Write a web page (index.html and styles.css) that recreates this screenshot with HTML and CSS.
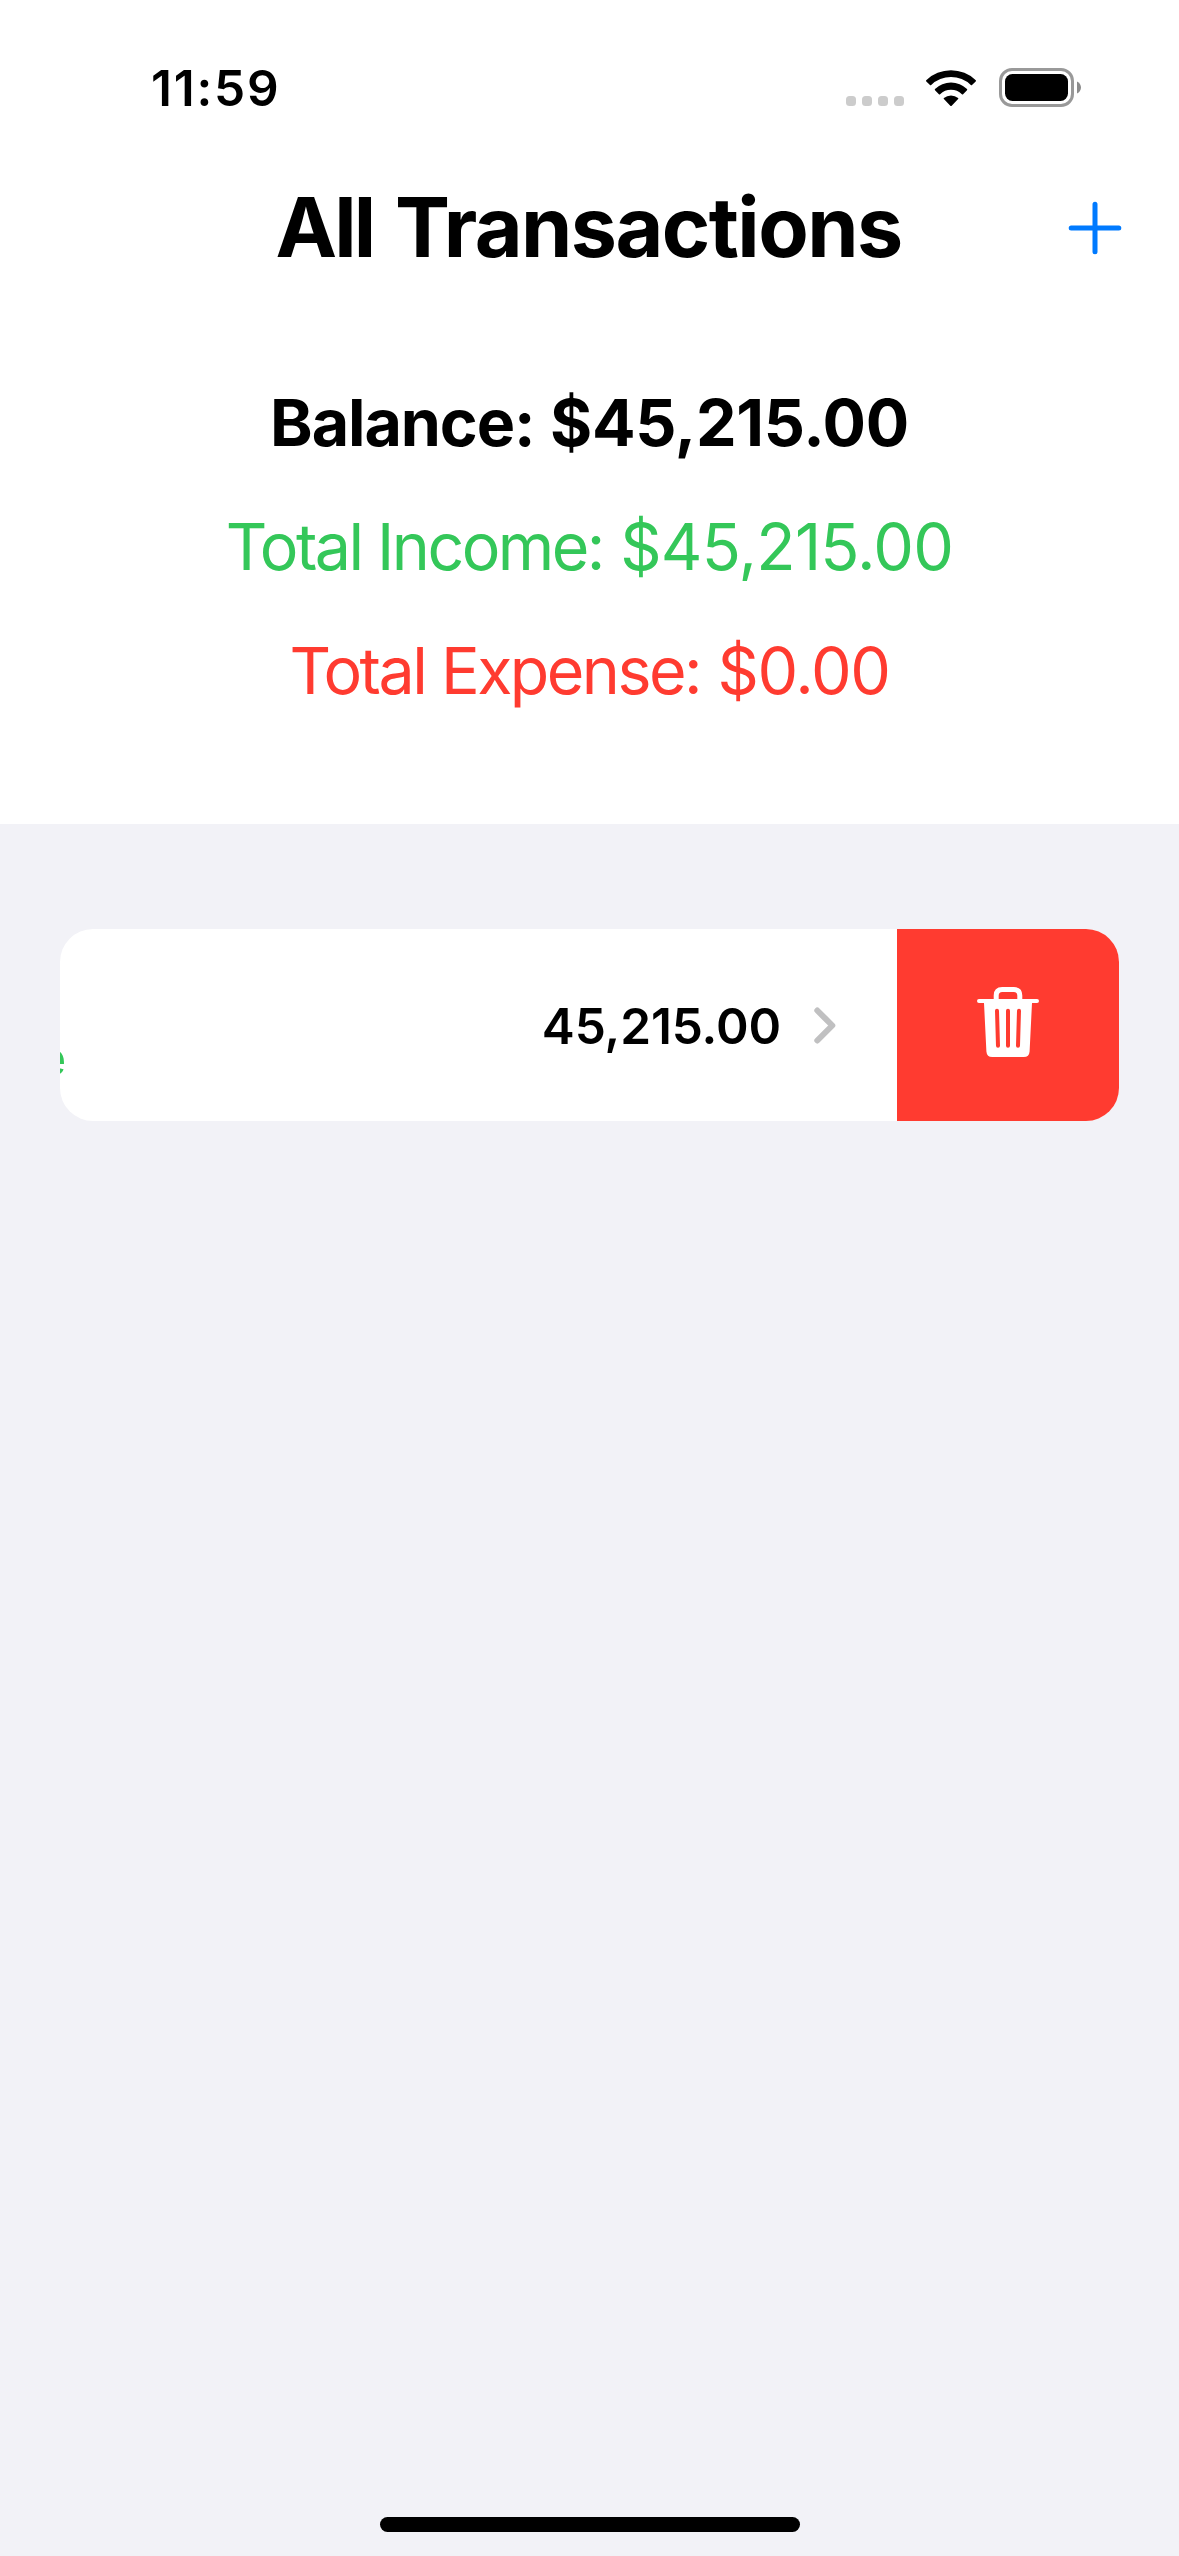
FILE: index.html
```html
<!DOCTYPE html>
<html lang="en">
<head>
<meta charset="utf-8">
<title>All Transactions</title>
<link rel="stylesheet" href="styles.css">
</head>
<body>
<div class="screen">
  <header class="top">
    <div class="status-bar">
      <span class="time">11:59</span>
      <div class="status-icons">
        <div class="cell-dots"><i></i><i></i><i></i><i></i></div>
        <svg class="wifi" viewBox="0 0 52 40" aria-hidden="true">
          <path d="M1.2 12.2A36 36 0 0 1 50.8 12.2Q51.2 12.8 50.7 13.4L47 17.1Q46.4 17.5 45.8 17A28.6 28.6 0 0 0 6.2 17Q5.6 17.5 5 17.1L1.3 13.4Q.8 12.8 1.2 12.2Z"/>
          <path d="M10 21.1A23 23 0 0 1 42 21.1Q42.5 21.7 42 22.3L38.1 26.2Q37.5 26.7 36.9 26.2A15.6 15.6 0 0 0 15.1 26.2Q14.5 26.7 13.9 26.2L10 22.3Q9.5 21.7 10 21.1Z"/>
          <path d="M18.9 29.9A11.3 11.3 0 0 1 33.1 29.9Q33.7 30.5 33.1 31.1L26.7 37.7Q26 38.3 25.3 37.7L18.9 31.1Q18.3 30.5 18.9 29.9Z"/>
        </svg>
        <svg class="battery" viewBox="0 0 84 40" aria-hidden="true">
          <rect x="1.5" y="1.5" width="72" height="36" rx="11.5" fill="none" stroke="#999" stroke-width="3"/>
          <rect x="6" y="6" width="63" height="27" rx="7.5"/>
          <path d="M78 13.5C80.5 14.5 82 17 82 19.5S80.500 24.500 78 25.500Z" fill="#8c8c8c"/>
        </svg>
      </div>
    </div>
    <div class="nav-bar">
      <h1 class="title"><span class="title-all">All</span> <span class="title-main">Transactions</span></h1>
      <svg class="add" viewBox="0 0 54 54" role="img" aria-label="Add">
        <path d="M27 3.200V50.800M3.200 27H50.800"/>
      </svg>
    </div>
    <div class="summary">
      <p class="line balance"><span class="label">Balance:</span> <span class="value">$45,215.00</span></p>
      <p class="line income"><span class="label">Total Income:</span> <span class="value">$45,215.00</span></p>
      <p class="line expense"><span class="label">Total Expense:</span> <span class="value">$0.00</span></p>
    </div>
  </header>

  <main class="list">
    <div class="row">
      <div class="row-content">
        <span class="kind">Income</span>
        <span class="amount">45,215.00</span>
        <svg class="chevron" viewBox="0 0 22 37" aria-hidden="true"><path d="M3.300 3.500L18.300 18.500L3.300 33.500"/></svg>
      </div>
      <div class="delete">
        <svg class="trash" viewBox="0 0 62 72" role="img" aria-label="Delete">
          <path class="trash-line" d="M19.200 14V9.500Q19.200 3.500 25.200 3.500H36.800Q42.800 3.500 42.800 9.500V14"/>
          <path d="M2 13H60A2 2 0 0 1 60 17H55L52.600 65.500Q52.200 71 46.700 71H15.300Q9.800 71 9.400 65.500L7 17H2A2 2 0 0 1 2 13Z"/>
          <path class="slot" d="M20 24.800L21 59.700M31 24.800V59.700M42 24.800L41 59.700"/>
        </svg>
      </div>
    </div>
  </main>

  <footer class="home"><div class="home-indicator"></div></footer>
</div>
</body>
</html>
```
FILE: styles.css
```css
* {
  box-sizing: border-box;
}

body {
  margin: 0;
  font-family: Inter, "Liberation Sans", sans-serif;
  color: #000;
}

.screen {
  display: flex;
  flex-direction: column;
  width: 1179px;
  height: 2556px;
  background: #f2f2f7;
  overflow: hidden;
}

.top {
  height: 824px;
  background: #fff;
}

.status-bar {
  display: flex;
  justify-content: space-between;
  height: 140px;
  padding: 58px 96px 0 151px;
}

.time {
  font-size: 49.5px;
  font-weight: 600;
  line-height: 60px;
  letter-spacing: 1.8px;
}

.status-icons {
  display: flex;
  align-items: flex-start;
  padding-top: 10px;
}

.cell-dots {
  display: flex;
  gap: 6px;
  margin: 28px 21px 0 0;
}

.cell-dots i {
  width: 10px;
  height: 10px;
  border-radius: 3.5px;
  background: #ccc;
}

.wifi {
  width: 52px;
  height: 40px;
  margin-right: 22px;
}

.battery {
  width: 84px;
  height: 40px;
}

.nav-bar {
  display: grid;
  grid-template-columns: 54px 1fr 54px;
  align-items: center;
  height: 174px;
  padding: 0 57px;
}

.title {
  grid-column: 2;
  display: flex;
  justify-content: center;
  gap: 21.7px;
  margin: 0 2px 0 0;
  font-size: 82.5px;
  font-weight: 700;
  line-height: 100px;
}

.title-all {
  letter-spacing: -2.8px;
}

.title-main {
  letter-spacing: -1.58px;
}

.add {
  width: 54px;
  height: 54px;
  margin-top: 2px;
  fill: none;
  stroke: #007aff;
  stroke-width: 5;
  stroke-linecap: round;
}

.summary {
  padding-top: 47px;
}

.line {
  display: flex;
  justify-content: center;
  gap: 17.5px;
  margin: 0;
  font-size: 64.5px;
  line-height: 124px;
  white-space: nowrap;
}

.balance {
  gap: 15.6px;
  font-weight: 700;
}

.balance .label {
  letter-spacing: -1.09px;
}

.balance .value {
  letter-spacing: -0.32px;
}

.income {
  color: #34c759;
}

.income .label {
  letter-spacing: -2.57px;
}

.income .value {
  letter-spacing: -0.76px;
}

.expense {
  color: #ff3b30;
}

.expense .label {
  letter-spacing: -2.53px;
}

.expense .value {
  letter-spacing: -1.35px;
}

.list {
  flex: 1;
  padding: 105px 60px 0;
}

/* The row is swiped left: its content slides out past the rounded edge. */
.row {
  display: flex;
  justify-content: flex-end;
  height: 192px;
  border-radius: 33px;
  background: #fff;
  overflow: hidden;
}

.row-content {
  display: flex;
  flex: none;
  align-items: center;
  width: 1059px;
  padding: 2px 61px 0 54px;
}

.kind {
  align-self: flex-end;
  margin-bottom: 33px;
  color: #34c759;
  font-size: 50px;
  line-height: 60px;
}

.amount {
  margin-left: auto;
  font-size: 49.5px;
  font-weight: 600;
  line-height: 60px;
  letter-spacing: -0.1px;
}

.chevron {
  width: 22px;
  height: 37px;
  margin: 0 0 2px 33px;
  fill: none;
  stroke: #c0c0c1;
  stroke-width: 6;
  stroke-linecap: round;
  stroke-linejoin: round;
}

.delete {
  display: flex;
  flex: none;
  justify-content: center;
  width: 222px;
  padding-top: 57px;
  background: #ff3b30;
}

.trash {
  width: 62px;
  height: 72px;
  fill: #fff;
}

.trash .trash-line {
  fill: none;
  stroke: #fff;
  stroke-width: 5;
}

.trash .slot {
  fill: none;
  stroke: #ff3b30;
  stroke-width: 4;
  stroke-linecap: round;
}

.home {
  display: flex;
  justify-content: center;
  padding-bottom: 24px;
}

.home-indicator {
  width: 420px;
  height: 15px;
  border-radius: 8px;
  background: #000;
}
```
